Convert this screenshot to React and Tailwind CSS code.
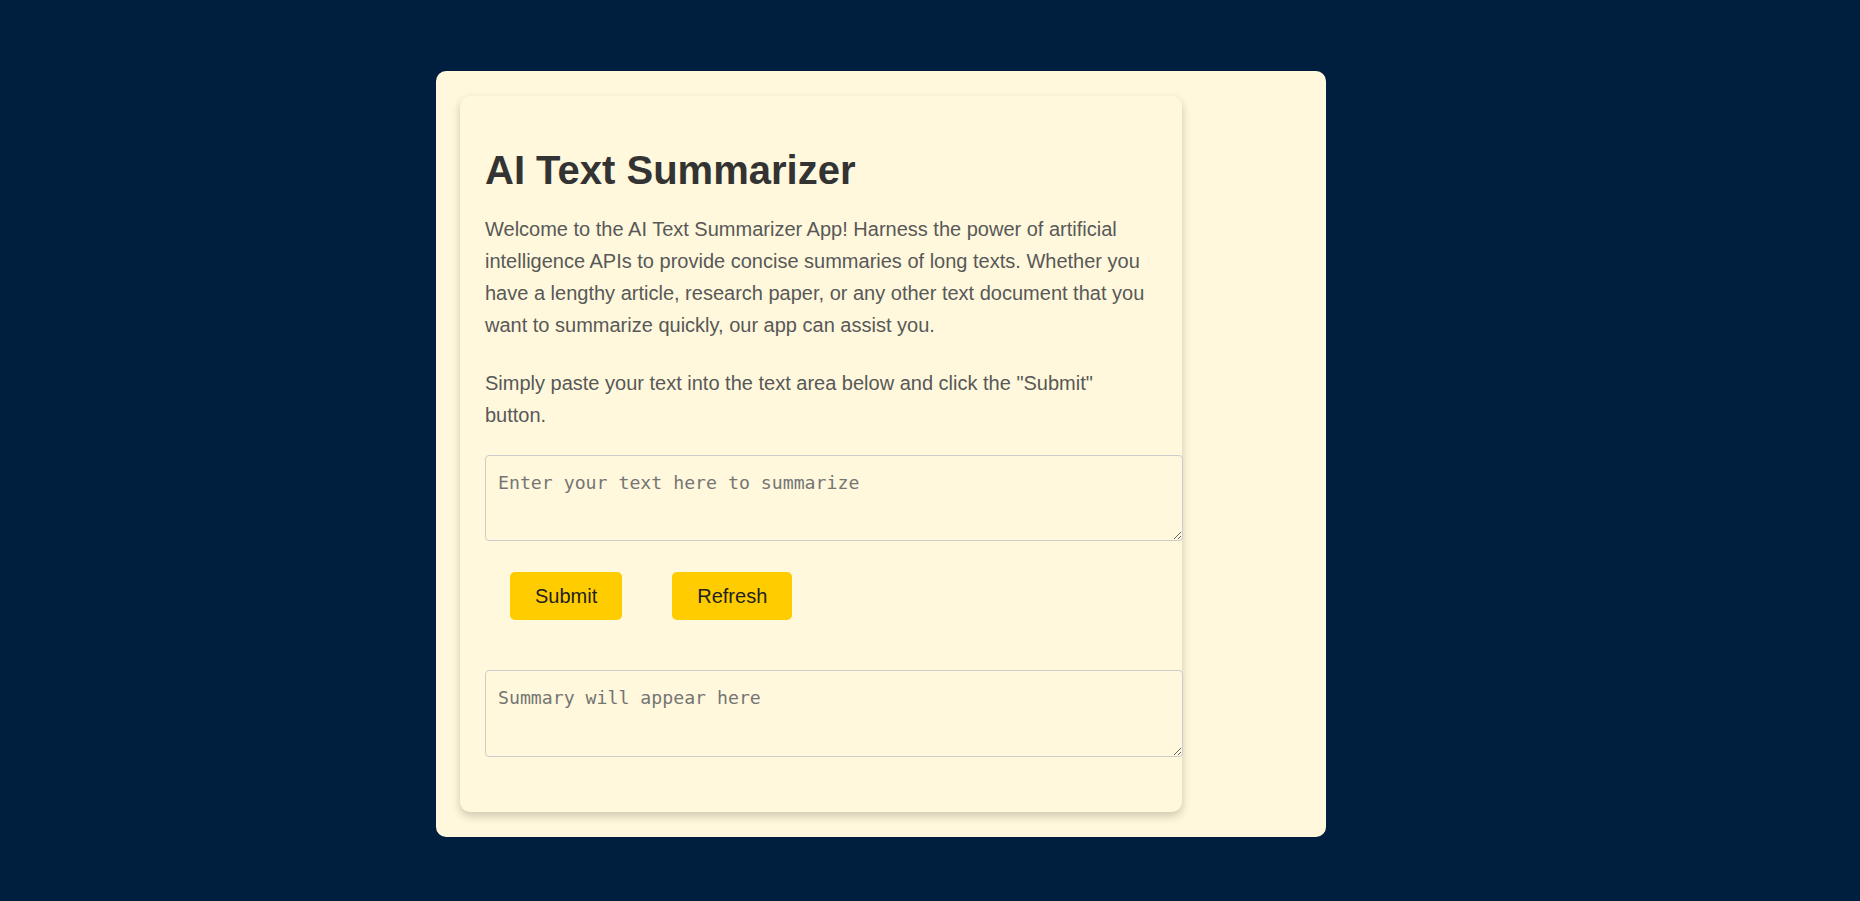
import { useState } from 'react';

export default function App() {
  const [text, setText] = useState('');
  const [summary, setSummary] = useState('');

  const handleSubmit = () => {
    if (!text.trim()) return;
    setSummary(text.trim().split(/(?<=[.!?])\s+/).slice(0, 2).join(' '));
  };

  const handleRefresh = () => {
    setText('');
    setSummary('');
  };

  return (
    <div className="min-h-screen bg-[#001f3f] pt-[71px] pl-[436px] font-['Liberation_Sans',Arial,sans-serif]">
      <div className="w-[890px] rounded-[10px] bg-[#fff8dc] p-[25px] pl-[24px]">
        <div className="w-[722px] rounded-[10px] bg-[#fff8dc] px-[25px] pt-[51px] pb-[55px] shadow-[0_4px_10px_rgba(0,0,0,0.2)]">
          <h1 className="text-[40px] leading-[46px] font-bold text-[#333]">AI Text Summarizer</h1>

          <p className="mt-[20px] text-[20px] leading-[32px] text-[#585858]">
            Welcome to the AI Text Summarizer App! Harness the power of artificial intelligence APIs to provide concise
            summaries of long texts. Whether you have a lengthy article, research paper, or any other text document that
            you want to summarize quickly, our app can assist you.
          </p>
          <p className="mt-[26px] text-[20px] leading-[32px] text-[#585858]">
            Simply paste your text into the text area below and click the "Submit" button.
          </p>

          <textarea
            value={text}
            onChange={(e) => setText(e.target.value)}
            placeholder="Enter your text here to summarize"
            className="mt-[24px] block h-[86px] w-[698px] rounded-[4px] border border-[#ccc] bg-transparent p-[12px] font-['DejaVu_Sans_Mono',monospace] text-[18.2px] leading-[1.6] text-[#333] placeholder:text-[#757575] outline-none"
          />

          <div className="mt-[31px] flex gap-[50px] pl-[25px]">
            <button
              onClick={handleSubmit}
              className="rounded-[5px] bg-[#ffcc00] px-[25px] py-[8px] text-[20px] leading-[32px] text-[#222]"
            >
              Submit
            </button>
            <button
              onClick={handleRefresh}
              className="rounded-[5px] bg-[#ffcc00] px-[25px] py-[8px] text-[20px] leading-[32px] text-[#222]"
            >
              Refresh
            </button>
          </div>

          <textarea
            value={summary}
            readOnly
            placeholder="Summary will appear here"
            className="mt-[50px] block h-[87px] w-[698px] rounded-[4px] border border-[#ccc] bg-transparent p-[12px] font-['DejaVu_Sans_Mono',monospace] text-[18.2px] leading-[1.6] text-[#333] placeholder:text-[#757575] outline-none"
          />
        </div>
      </div>
    </div>
  );
}
